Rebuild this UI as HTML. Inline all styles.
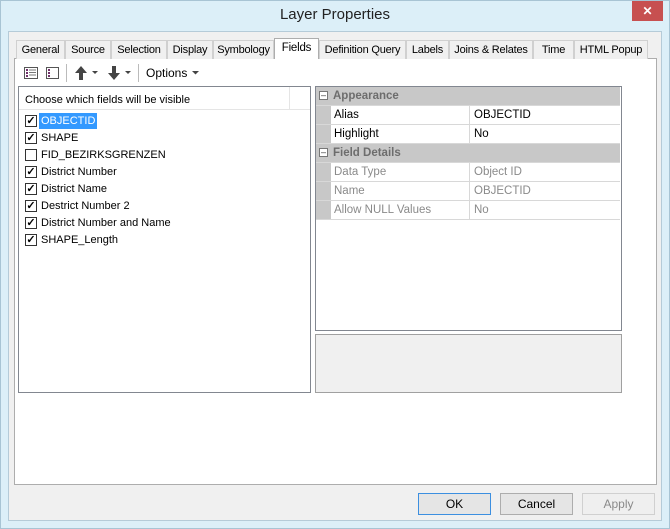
<!DOCTYPE html>
<html><head><style>
*{box-sizing:border-box;margin:0;padding:0}
body{width:670px;height:529px;background:#dceff8;font-family:"Liberation Sans",sans-serif;font-size:12px;color:#000;position:relative;overflow:hidden}
.a{position:absolute}
.win{left:0;top:0;width:670px;height:529px;border:1px solid #a8c4d4}
.title{left:0;top:6px;width:670px;text-align:center;font-size:15px;color:#222}
.close{left:632px;top:1px;width:31px;height:20px;background:#c75050;color:#fff;text-align:center;font-size:12px;line-height:20px;font-weight:bold}
.client{left:8px;top:31px;width:654px;height:490px;background:#f0f0f0;border:1px solid #b5cbd8}
.tab{top:40px;height:19px;border:1px solid #d0d0d0;border-bottom:none;background:#f0f0f0;font-size:11px;text-align:center;line-height:18px;color:#000;white-space:nowrap;letter-spacing:-0.2px}
.panel{left:14px;top:58px;width:643px;height:427px;background:#fff;border:1px solid #adadad}
.cb{width:12px;height:12px;border:1px solid #333;background:#fff;font-size:11px;line-height:10px;text-align:center;font-weight:bold}
.item{font-size:11px}
.row{left:316px;width:304px;height:19px;border-bottom:1px solid #d8d8d8;font-size:11.5px;line-height:18px}
.k{position:absolute;left:15px;width:139px;height:18px;padding-left:3px;background:#fff;border-right:1px solid #d8d8d8}
.v{position:absolute;left:155px;padding-left:3px}
.btn{top:493px;width:73px;height:22px;border:1px solid #adadad;background:#e5e5e5;text-align:center;line-height:20px;font-size:12px}
</style></head><body>
<div class="a win"></div>
<div class="a title">Layer Properties</div>
<div class="a close">✕</div>
<div class="a client"></div>
<div class="a panel"></div>
<div class="a tab" style="left:16px;width:49px">General</div>
<div class="a tab" style="left:65px;width:46px">Source</div>
<div class="a tab" style="left:111px;width:56px">Selection</div>
<div class="a tab" style="left:167px;width:46px">Display</div>
<div class="a tab" style="left:213px;width:61px">Symbology</div>
<div class="a tab" style="left:274px;top:38px;width:45px;height:21px;background:#fff;border-color:#adadad;font-size:11.5px">Fields</div>
<div class="a tab" style="left:319px;width:87px">Definition Query</div>
<div class="a tab" style="left:406px;width:43px">Labels</div>
<div class="a tab" style="left:449px;width:84px">Joins &amp; Relates</div>
<div class="a tab" style="left:533px;width:41px">Time</div>
<div class="a tab" style="left:574px;width:74px">HTML Popup</div>
<svg class="a" style="left:22px;top:64px" width="180" height="18">
<rect x="2.5" y="3.5" width="13" height="11" fill="none" stroke="#555"/>
<g stroke="#777"><line x1="7" y1="6" x2="14" y2="6"/><line x1="7" y1="8.5" x2="14" y2="8.5"/><line x1="7" y1="11" x2="14" y2="11"/></g>
<g fill="#70306a"><rect x="4" y="5" width="2" height="2"/><rect x="4" y="8" width="2" height="2"/><rect x="4" y="11" width="2" height="2"/></g>
<rect x="24.5" y="3.5" width="12" height="11" fill="none" stroke="#555"/>
<g fill="#70306a"><rect x="26" y="5" width="2" height="2"/><rect x="26" y="8" width="2" height="2"/><rect x="26" y="11" width="2" height="2"/></g>
<line x1="44.5" y1="0" x2="44.5" y2="18" stroke="#bbb"/>
<path d="M59 2 L53 9 H57 V16 H61 V9 H65 Z" fill="#444"/>
<path d="M70 7 H76 L73 10 Z" fill="#444"/>
<path d="M92 16 L86 9 H90 V2 H94 V9 H98 Z" fill="#444"/>
<path d="M103 7 H109 L106 10 Z" fill="#444"/>
<line x1="116.5" y1="0" x2="116.5" y2="18" stroke="#bbb"/>
<text x="124" y="13" font-size="12" font-family="Liberation Sans">Options</text>
<path d="M170 7 H177 L173.5 10.5 Z" fill="#444"/>
</svg>
<div class="a" style="left:18px;top:86px;width:293px;height:307px;border:1px solid #828790;background:#fff"></div>
<div class="a" style="left:19px;top:87px;width:291px;height:23px;border-bottom:1px solid #e5e5e5"></div>
<div class="a" style="left:289px;top:87px;width:1px;height:23px;background:#e5e5e5"></div>
<div class="a item" style="left:25px;top:94px">Choose which fields will be visible</div>
<div class="a" style="left:39px;top:113px;width:58px;height:16px;background:#3399ff"></div>
<div class="a cb" style="left:25px;top:115px">✓</div><div class="a item" style="left:41px;top:115px;color:#fff">OBJECTID</div>
<div class="a cb" style="left:25px;top:132px">✓</div><div class="a item" style="left:41px;top:132px">SHAPE</div>
<div class="a cb" style="left:25px;top:149px"></div><div class="a item" style="left:41px;top:149px">FID_BEZIRKSGRENZEN</div>
<div class="a cb" style="left:25px;top:166px">✓</div><div class="a item" style="left:41px;top:166px">District Number</div>
<div class="a cb" style="left:25px;top:183px">✓</div><div class="a item" style="left:41px;top:183px">District Name</div>
<div class="a cb" style="left:25px;top:200px">✓</div><div class="a item" style="left:41px;top:200px">Destrict Number 2</div>
<div class="a cb" style="left:25px;top:217px">✓</div><div class="a item" style="left:41px;top:217px">District Number and Name</div>
<div class="a cb" style="left:25px;top:234px">✓</div><div class="a item" style="left:41px;top:234px">SHAPE_Length</div>
<div class="a" style="left:315px;top:86px;width:307px;height:245px;border:1px solid #828790;background:#fff"></div>
<div class="a" style="left:316px;top:87px;width:15px;height:133px;background:#c8c8c8"></div>
<div class="a row" style="top:87px;background:#c8c8c8;color:#6d6d6d;font-weight:bold;padding-left:17px"><span style="position:absolute;left:3px;top:4px;width:9px;height:9px;border:1px solid #777;background:#fff;font-size:9px;line-height:6px;text-align:center;font-weight:normal;color:#333">–</span>Appearance</div>
<div class="a row" style="top:106px"><span class="k">Alias</span><span class="v">OBJECTID</span></div>
<div class="a row" style="top:125px"><span class="k">Highlight</span><span class="v">No</span></div>
<div class="a row" style="top:144px;background:#c8c8c8;color:#6d6d6d;font-weight:bold;padding-left:17px"><span style="position:absolute;left:3px;top:4px;width:9px;height:9px;border:1px solid #777;background:#fff;font-size:9px;line-height:6px;text-align:center;font-weight:normal;color:#333">–</span>Field Details</div>
<div class="a row" style="top:163px;color:#8a8a8a"><span class="k">Data Type</span><span class="v">Object ID</span></div>
<div class="a row" style="top:182px;color:#8a8a8a"><span class="k">Name</span><span class="v">OBJECTID</span></div>
<div class="a row" style="top:201px;color:#8a8a8a"><span class="k">Allow NULL Values</span><span class="v">No</span></div>
<div class="a" style="left:315px;top:334px;width:307px;height:59px;border:1px solid #a0a0a0;background:#f0f0f0"></div>
<div class="a btn" style="left:418px;border-color:#3c8fe0">OK</div>
<div class="a btn" style="left:500px">Cancel</div>
<div class="a btn" style="left:582px;color:#8a8a8a;border-color:#d0d0d0;background:#efefef">Apply</div>
</body></html>
